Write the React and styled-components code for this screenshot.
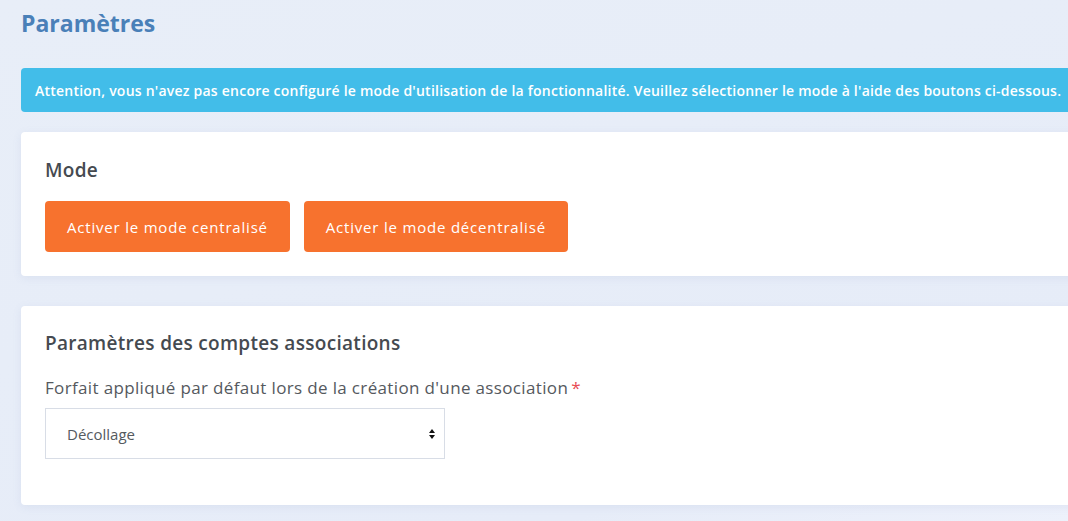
import React from 'react'
import styled, { createGlobalStyle } from 'styled-components'

const Global = createGlobalStyle`
  html, body {
    margin: 0;
    padding: 0;
    overflow: hidden;
  }
  body {
    font-family: "Open Sans", "Noto Sans", sans-serif;
    background: linear-gradient(160deg, #e8eef8 0%, #e6ecf8 80%, #edf1fb 100%);
    min-height: 521px;
  }
`

const Page = styled.div`
  padding: 8px 0 0 21px;
  width: 1100px;
  display: flex;
  flex-direction: column;
`

const Title = styled.h1`
  margin: 0;
  font-size: 23px;
  font-weight: 700;
  color: #4a80b8;
  line-height: 30px;
`

const Alert = styled.div`
  margin-top: 30px;
  background: #42bde9;
  color: #fff;
  border-radius: 4px;
  height: 44px;
  display: flex;
  align-items: center;
  padding-left: 14px;
  font-size: 14px;
  font-weight: 600;
  letter-spacing: 0.23px;
  white-space: nowrap;
`

const Card = styled.section`
  margin-top: ${p => p.$top}px;
  background: #fff;
  border-radius: 4px;
  box-shadow: 0 2px 8px rgba(120, 140, 190, 0.12);
  padding: ${p => p.$pad};
  display: flex;
  flex-direction: column;
`

const CardTitle = styled.h2`
  margin: 0;
  font-size: 19px;
  font-weight: 600;
  letter-spacing: 0.3px;
  color: #454a50;
  line-height: 24px;
`

const Buttons = styled.div`
  display: flex;
  gap: 14px;
  margin-top: 19px;
`

const Button = styled.button`
  height: 51px;
  padding: 0 22px;
  border: none;
  border-radius: 4px;
  background: #f7722e;
  color: #fff;
  font-family: inherit;
  font-size: 15px;
  letter-spacing: 0.8px;
  cursor: pointer;
`

const Label = styled.label`
  margin-top: 22px;
  font-size: 17px;
  letter-spacing: 0.35px;
  color: #55595e;
  line-height: 22px;
`

const Req = styled.span`
  color: #e84c55;
  margin-left: 3px;
`

const SelectBox = styled.div`
  margin-top: 9px;
  width: 400px;
  height: 51px;
  box-sizing: border-box;
  border: 1px solid #d8dde6;
  display: flex;
  align-items: center;
  justify-content: space-between;
  padding: 0 8px 0 21px;
  font-size: 15px;
  color: #555a60;
`

const Arrows = () => (
  <svg width="8" height="14" viewBox="0 0 8 14">
    <path d="M4 2 L7 6 L1 6 Z" fill="#111" />
    <path d="M4 12 L7 8 L1 8 Z" fill="#111" />
  </svg>
)

export default function App() {
  return (
    <>
      <Global />
      <Page>
        <Title>Paramètres</Title>
        <Alert>
          Attention, vous n'avez pas encore configuré le mode d'utilisation de la fonctionnalité. Veuillez sélectionner le mode à l'aide des boutons ci-dessous.
        </Alert>
        <Card $top={20} $pad="26px 24px 24px">
          <CardTitle>Mode</CardTitle>
          <Buttons>
            <Button>Activer le mode centralisé</Button>
            <Button>Activer le mode décentralisé</Button>
          </Buttons>
        </Card>
        <Card $top={30} $pad="25px 24px 46px">
          <CardTitle>Paramètres des comptes associations</CardTitle>
          <Label>
            Forfait appliqué par défaut lors de la création d'une association<Req>*</Req>
          </Label>
          <SelectBox>
            Décollage
            <Arrows />
          </SelectBox>
        </Card>
      </Page>
    </>
  )
}
